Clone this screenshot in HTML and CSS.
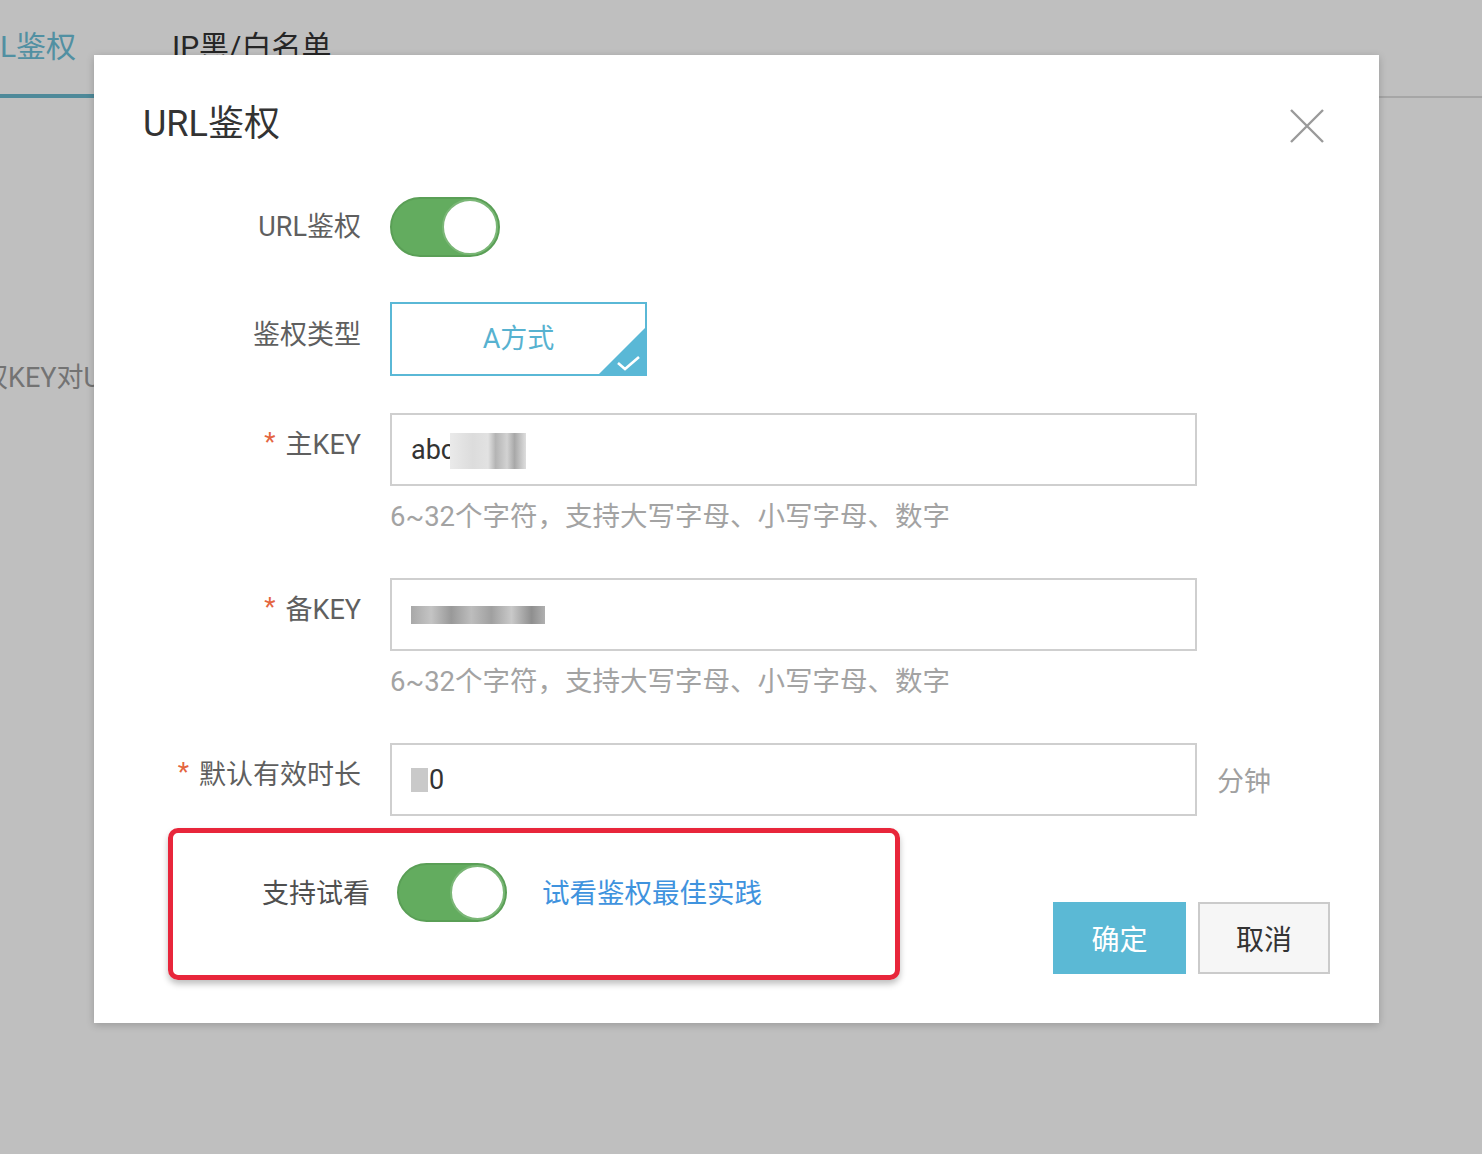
FILE: index.html
```html
<!DOCTYPE html>
<html lang="zh-CN">
<head>
	<title>URL鉴权</title>
	<meta charset="utf-8">
	<link rel="stylesheet" href="styles.css">
</head>
<body>
	<div id="page">
		<div class="tabs">
			<div class="tab active">URL鉴权</div>
			<div class="tab">IP黑/白名单</div>
		</div>
		<div class="page-body">
			<p class="page-text">鉴权KEY对URL进行签名</p>
		</div>
	</div>
	<div class="mask"></div>

	<div class="modal">
		<div class="modal-head">
			<h2>URL鉴权</h2>
			<button class="close" type="button">
				<svg width="36" height="36" viewBox="0 0 36 36"><path d="M2 2L34 34M34 2L2 34" stroke="#9a9a9a" stroke-width="2.4" fill="none"/></svg>
			</button>
		</div>

		<div class="form-row">
			<label class="label lh-60">URL鉴权</label>
			<div class="control">
				<span class="switch on"><span class="knob"></span></span>
			</div>
		</div>

		<div class="form-row">
			<label class="label lh-66">鉴权类型</label>
			<div class="control">
				<div class="choice selected">
					A方式
					<svg class="corner" width="48" height="48" viewBox="0 0 48 48">
						<path d="M48 0L48 48L0 48Z" fill="#5ab8d6"/>
						<path d="M20 36L27 42L41 30" stroke="#fff" stroke-width="2.6" fill="none"/>
					</svg>
				</div>
			</div>
		</div>

		<div class="form-row gap-46">
			<label class="label lh-64"><span class="req">*</span>主KEY</label>
			<div class="control">
				<div class="input"><span>abc</span><span class="blur b1"></span></div>
				<p class="hint">6~32个字符，支持大写字母、小写字母、数字</p>
			</div>
		</div>

		<div class="form-row gap-46">
			<label class="label lh-64"><span class="req">*</span>备KEY</label>
			<div class="control">
				<div class="input"><span class="blur b2"></span></div>
				<p class="hint">6~32个字符，支持大写字母、小写字母、数字</p>
			</div>
		</div>

		<div class="form-row gap-12">
			<label class="label lh-64"><span class="req">*</span>默认有效时长</label>
			<div class="control inline">
				<div class="input"><span class="blur b3"></span><span>0</span></div>
				<span class="unit">分钟</span>
			</div>
		</div>

		<div class="footer-row">
			<div class="highlight">
				<label class="label trial">支持试看</label>
				<span class="switch on"><span class="knob"></span></span>
				<a class="link" href="#">试看鉴权最佳实践</a>
			</div>
			<div class="buttons">
				<button class="btn primary" type="button">确定</button>
				<button class="btn" type="button">取消</button>
			</div>
		</div>
	</div>
</body>
</html>
```

FILE: styles.css
```css
body {
	margin: 0;
	padding: 0;
	font-family: Roboto, "Noto Sans CJK SC", sans-serif;
	background: #fff;
	width: 1482px;
	height: 1154px;
	overflow: hidden;
	position: relative;
}

#page {
	margin-left: -38px;
}

.tabs {
	display: flex;
	border-bottom: 2px solid #dedede;
	height: 96px;
	margin-top: 0;
}

.tab {
	font-size: 30px;
	line-height: 30px;
	padding-top: 32px;
	color: #333;
	margin-right: 94px;
	height: 64px;
}

.tab.active {
	color: #6cc0d8;
	border-bottom: 4px solid #68b7cd;
	width: 210px;
	height: 62px;
	margin-bottom: -2px;
	margin-right: 0;
}

.page-body {
	padding-top: 258px;
}

.page-text {
	margin: 0 0 0 -8px;
	font-size: 27px;
	color: #9a9a9a;
}

.mask {
	position: absolute;
	left: 0;
	top: 0;
	right: 0;
	bottom: 0;
	background: rgba(0, 0, 0, 0.25);
}

.modal {
	position: absolute;
	left: 94px;
	top: 55px;
	width: 1187px;
	background: #fff;
	padding: 49px 49px 43px 49px;
	box-shadow: 0 2px 8px rgba(0, 0, 0, 0.2);
}

.modal-head {
	display: flex;
	justify-content: space-between;
	align-items: center;
	height: 40px;
	margin-bottom: 53px;
	padding-right: 5px;
}

.modal-head h2 {
	margin: 0;
	font-size: 36px;
	line-height: 40px;
	font-weight: normal;
	color: #333;
}

.close {
	border: none;
	background: none;
	padding: 0;
	width: 36px;
	height: 36px;
	margin-top: 4px;
}

.form-row {
	display: flex;
	align-items: flex-start;
	margin-bottom: 45px;
}

.form-row + .form-row {
	margin-bottom: 37px;
}

.form-row.gap-46 {
	margin-bottom: 46px;
}

.form-row.gap-12 {
	margin-bottom: 12px;
}

.label {
	width: 218px;
	flex-shrink: 0;
	text-align: right;
	font-size: 27px;
	color: #5f5f5f;
	margin-right: 29px;
}

.lh-60 { line-height: 60px; }
.lh-64 { line-height: 64px; }
.lh-66 { line-height: 66px; }

.req {
	color: #e4653f;
	font-size: 26px;
	position: relative;
	top: -3px;
	margin-right: 10px;
}

.switch {
	display: block;
	width: 110px;
	height: 60px;
	border-radius: 30px;
	box-sizing: border-box;
	border: 2px solid #5a9f56;
	background: #63ac5f;
	position: relative;
}

.switch .knob {
	position: absolute;
	right: 0;
	top: 0;
	width: 56px;
	height: 56px;
	border-radius: 50%;
	background: #fff;
	box-sizing: border-box;
	border: 2px solid #7bb777;
}

.choice {
	width: 257px;
	height: 74px;
	box-sizing: border-box;
	border: 2px solid #5ab8d6;
	text-align: center;
	line-height: 70px;
	font-size: 27px;
	color: #57b2d0;
	position: relative;
}

.choice .corner {
	position: absolute;
	right: -1px;
	bottom: -1px;
}

.input {
	width: 807px;
	height: 73px;
	box-sizing: border-box;
	border: 2px solid #cfcfcf;
	padding-left: 19px;
	display: flex;
	align-items: center;
	font-size: 27px;
	color: #333;
	position: relative;
}

.blur {
	display: inline-block;
	height: 22px;
}

.blur.b1 {
	width: 76px;
	height: 36px;
	margin-left: -5px;
	margin-top: 2px;
	background: linear-gradient(to right, #eaeaea 0, #dcdcdc 30%, #e2e2e2 50%, #b4b4b4 60%, #d2d2d2 75%, #a8a8a8 85%, #dedede 100%);
}

.blur.b2 {
	width: 134px;
	height: 18px;
	background: linear-gradient(to right, #a8a8a8 0, #c4c4c4 15%, #999 30%, #bdbdbd 45%, #a0a0a0 60%, #c9c9c9 75%, #8f8f8f 90%, #b0b0b0 100%);
	margin-top: 0;
}

.blur.b3 {
	width: 17px;
	height: 24px;
	background: #c9c9c9;
	margin-right: 1px;
}

.hint {
	margin: 16px 0 0 0;
	font-size: 27.5px;
	line-height: 30px;
	color: #a3a3a3;
}

.control.inline {
	display: flex;
	align-items: center;
}

.unit {
	margin-left: 20px;
	font-size: 27px;
	color: #a0a0a0;
}

.footer-row {
	display: flex;
	align-items: flex-start;
	margin-left: 25px;
}

.highlight {
	width: 732px;
	height: 152px;
	box-sizing: border-box;
	border: 5px solid #e8263b;
	border-radius: 10px;
	box-shadow: 0 4px 6px rgba(0, 0, 0, 0.25);
	display: flex;
	align-items: flex-start;
	padding-top: 30px;
}

.label.trial {
	width: 197px;
	margin-right: 27px;
	line-height: 62px;
	color: #4f4f4f;
}

.highlight .switch {
	height: 59px;
}

.highlight .switch .knob {
	width: 55px;
	height: 55px;
}

.link {
	margin-left: 35px;
	font-size: 27.5px;
	line-height: 62px;
	color: #3f93de;
	text-decoration: none;
}

.buttons {
	margin-left: auto;
	margin-top: 74px;
	display: flex;
	gap: 12px;
}

.btn {
	width: 132px;
	height: 72px;
	box-sizing: border-box;
	border: 2px solid #cbcbcb;
	background: #f6f6f6;
	font-family: Roboto, "Noto Sans CJK SC", sans-serif;
	font-size: 28px;
	color: #333;
	padding: 0;
}

.btn.primary {
	width: 133px;
	border: none;
	background: #5bb9d5;
	color: #fff;
}
```
